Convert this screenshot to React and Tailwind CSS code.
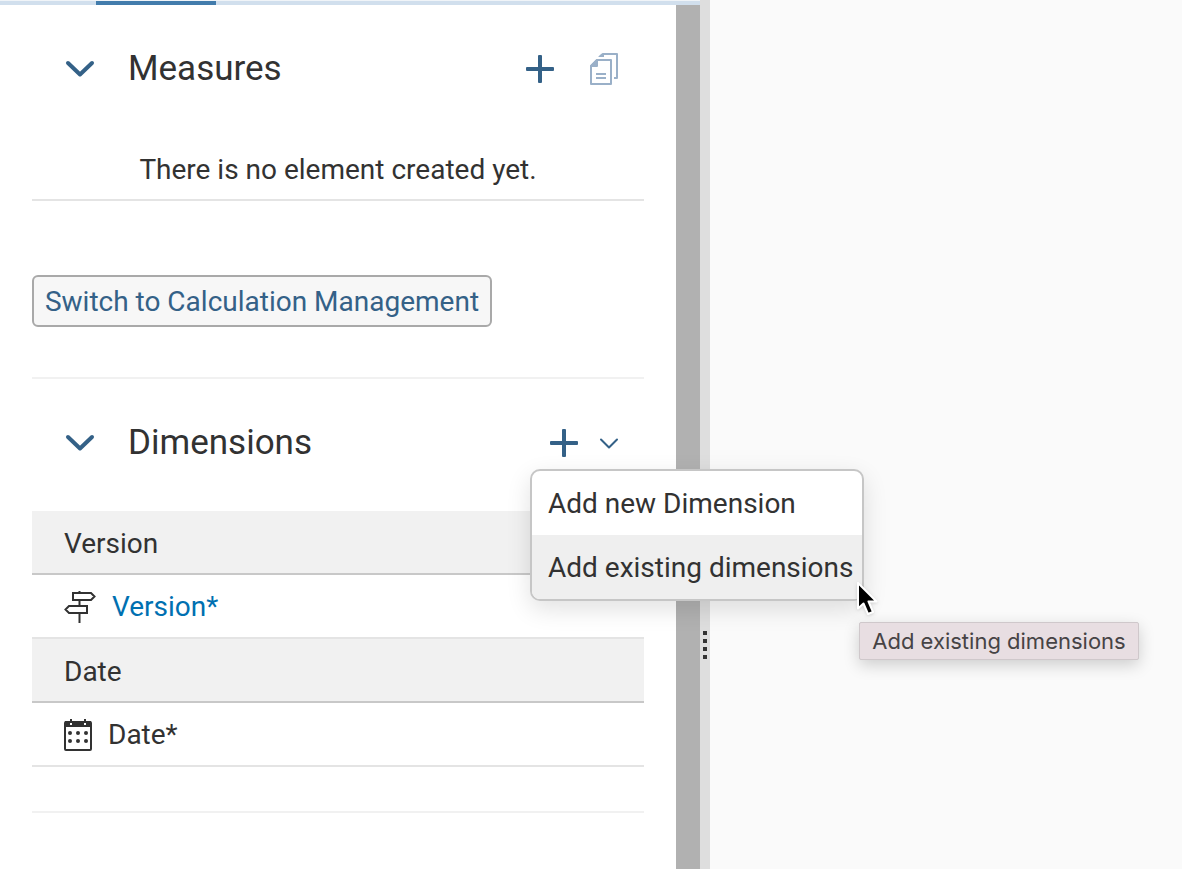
import React from "react";

function ChevronIcon() {
  return (
    <svg viewBox="0 0 32 32" className="size-8" fill="none" stroke="currentColor" strokeWidth="4" strokeLinecap="round" strokeLinejoin="round" aria-hidden="true">
      <path d="M4 10 L16 21.5 L28 10" />
    </svg>
  );
}

function SmallChevronIcon() {
  return (
    <svg viewBox="0 0 24 32" className="h-8 w-6" fill="none" stroke="currentColor" strokeWidth="2" strokeLinecap="round" strokeLinejoin="round" aria-hidden="true">
      <path d="M5 12.5 L13 20.5 L21 12.5" />
    </svg>
  );
}

function PlusIcon() {
  return (
    <svg viewBox="0 0 32 32" className="size-8" fill="currentColor" aria-hidden="true">
      <rect x="14" y="2" width="4" height="28" rx="1" />
      <rect x="2" y="14" width="28" height="4" rx="1" />
    </svg>
  );
}

function CopyIcon() {
  return (
    <svg viewBox="0 0 32 32" className="size-8" fill="none" stroke="currentColor" strokeWidth="2" strokeLinejoin="round" aria-hidden="true">
      <path d="M9 7 H23 V31 H3 V13 Z" />
      <path d="M3 13 L9 7 V13 Z" fill="currentColor" />
      <path d="M8 21 H18 M8 25 H18" />
      <path d="M26 25 H29 V1 H15 L12 3.2" />
      <path d="M10 4 L14 0.5 H16 V4 Z" fill="currentColor" stroke="none" />
    </svg>
  );
}

function SignpostIcon() {
  return (
    <svg viewBox="0 0 32 32" className="size-8" fill="none" stroke="currentColor" strokeWidth="2" aria-hidden="true">
      <path d="M15.5 0 V2 M15.5 9 V14 M15.5 22 V32" />
      <path d="M9 2 H27 L30.5 5.5 L27 9 H9 Z" />
      <path d="M23 15 H5 L1.5 18.5 L5 22 H23 Z" />
    </svg>
  );
}

function CalendarIcon() {
  return (
    <svg viewBox="0 0 28 32" className="h-8 w-7" fill="none" aria-hidden="true">
      <rect x="1" y="3" width="26" height="28" rx="1" stroke="currentColor" strokeWidth="2" />
      <path d="M1 2 H27 V8 H1 Z" fill="currentColor" />
      <path d="M6 0 H8 V4 H6 Z M20 0 H22 V4 H20 Z" fill="currentColor" />
      <path d="M6 4 H8 V6 H6 Z M20 4 H22 V6 H20 Z" fill="#fff" />
      <g fill="currentColor">
        <circle cx="6" cy="14" r="2" />
        <circle cx="14" cy="14" r="2" />
        <circle cx="22" cy="14" r="2" />
        <circle cx="6" cy="22" r="2" />
        <circle cx="14" cy="22" r="2" />
        <circle cx="22" cy="22" r="2" />
      </g>
    </svg>
  );
}

function PointerIcon() {
  return (
    <svg viewBox="0 0 22 36" className="absolute top-[154px] left-[308px] z-30 h-9 w-[22px] drop-shadow" aria-hidden="true">
      <path d="M2 2 V27.5 L7.5 22.5 L12 33 L17 31 L12.5 20.5 H20.5 Z" fill="#000" stroke="#fff" strokeWidth="2" strokeLinejoin="round" />
    </svg>
  );
}

function SectionHeader({ title, children }) {
  return (
    <header className="mt-8 mb-9 flex h-16 items-center gap-8 pr-6 pl-8">
      <button type="button" aria-label={"Collapse " + title} aria-expanded="true" className="text-[#346187]">
        <ChevronIcon />
      </button>
      <h2 className="flex-1 text-[35px] leading-10">{title}</h2>
      {children}
    </header>
  );
}

function GroupRow({ children }) {
  return <h3 className="flex h-16 items-center border-b-2 border-[#c8c8c8] bg-[#f1f1f1] px-8 pt-1">{children}</h3>;
}

function ItemRow({ children }) {
  return <div className="flex h-16 items-center gap-4 border-b-2 border-[#e4e4e4] px-8 pt-0.5">{children}</div>;
}

function AddDimensionMenu() {
  return (
    <div className="relative flex items-center gap-4 text-[#346187]">
      <button type="button" aria-label="Add dimension"><PlusIcon /></button>
      <button type="button" aria-label="Add options" aria-haspopup="menu" aria-expanded="true"><SmallChevronIcon /></button>
      <div role="menu" className="absolute top-[42px] -left-[18px] z-10 flex w-[334px] flex-col overflow-hidden rounded-[10px] border-2 border-[#c6c6c6] bg-white text-[#323232] shadow-[0_8px_24px_rgba(0,0,0,0.12)]">
        <button type="button" role="menuitem" className="h-16 px-4 pt-0.5 text-left whitespace-nowrap">Add new Dimension</button>
        <button type="button" role="menuitem" className="h-16 bg-[#efefef] px-4 pt-0.5 text-left whitespace-nowrap">Add existing dimensions</button>
      </div>
      <PointerIcon />
      <div role="tooltip" className="absolute top-[195px] left-[311px] z-20 flex h-[38px] w-[280px] items-center justify-center rounded-xs border border-[#cfc8cb] bg-[#e8dee2] font-['Inter',sans-serif] text-[22px] leading-7 whitespace-nowrap text-[#464345] shadow-[0_5px_16px_rgba(0,0,0,0.18)]">
        Add existing dimensions
      </div>
    </div>
  );
}

export default function App() {
  return (
    <div className="flex min-h-screen bg-[#fafafa] font-['Roboto','Noto_Sans',sans-serif] text-[28px] leading-9 text-[#323232]">
      <aside className="z-10 flex w-[700px] shrink-0 flex-col">
        <div className="flex h-[5px] border-t border-[#f0f4f8] bg-[#d1dfed] pl-24">
          <div className="w-[120px] bg-[#427cac]" />
        </div>
        <div className="flex flex-1">
          <div className="flex-1 bg-white px-8">
            <section className="border-b-2 border-[#f1f1f1] pb-[50px]">
              <SectionHeader title="Measures">
                <div className="flex items-center gap-8">
                  <button type="button" aria-label="Add measure" className="text-[#346187]"><PlusIcon /></button>
                  <button type="button" aria-label="Copy measures" disabled className="text-[#9ab0c8]"><CopyIcon /></button>
                </div>
              </SectionHeader>
              <p className="flex h-16 items-center justify-center border-b-2 border-[#e4e4e4] pt-1">There is no element created yet.</p>
              <button type="button" className="mt-[74px] flex h-[52px] w-[460px] items-center justify-center rounded-md border-2 border-[#a9a9a9] bg-[#f7f7f7] pt-0.5 whitespace-nowrap text-[#346187]">
                Switch to Calculation Management
              </button>
            </section>
            <section className="border-b-2 border-[#f1f1f1] pb-11">
              <SectionHeader title="Dimensions">
                <AddDimensionMenu />
              </SectionHeader>
              <GroupRow>Version</GroupRow>
              <ItemRow>
                <SignpostIcon />
                <a href="#version" className="text-[#0070b1]">Version*</a>
              </ItemRow>
              <GroupRow>Date</GroupRow>
              <ItemRow>
                <CalendarIcon />
                <span>Date*</span>
              </ItemRow>
            </section>
          </div>
          <div className="w-6 bg-[#b1b1b1]" />
        </div>
      </aside>
      <div role="separator" aria-orientation="vertical" className="flex w-[10px] shrink-0 flex-col items-center gap-1 bg-[#dedede] pt-[631px]">
        <span className="size-1 bg-[#333]" />
        <span className="size-1 bg-[#333]" />
        <span className="size-1 bg-[#333]" />
        <span className="size-1 bg-[#333]" />
      </div>
      <main className="flex-1" />
    </div>
  );
}
